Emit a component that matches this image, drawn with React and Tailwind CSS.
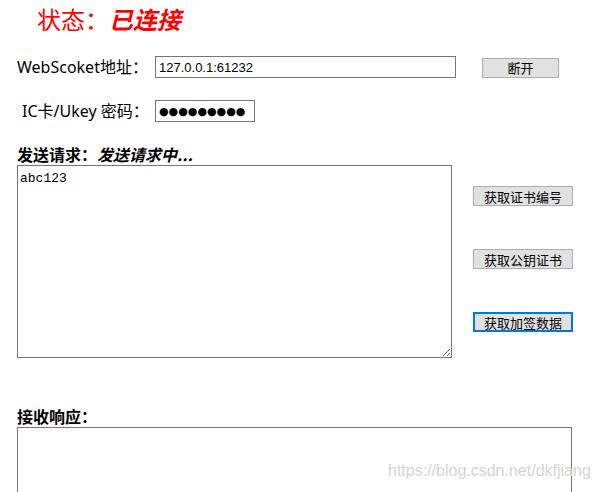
import React from 'react';

const cjk = { fontFamily: '"Noto Sans", "Noto Sans CJK SC", sans-serif' };

const Btn = ({ children, focused }) => (
    <button
        className={
            'h-[20px] w-[100px] bg-[#e1e1e1] text-[13px] leading-none text-black ' +
            (focused ? 'border-2 border-[#0078d7]' : 'border border-[#adadad]')
        }
        style={{ fontFamily: '"Noto Sans CJK SC", sans-serif' }}
    >
        {children}
    </button>
);

const App = () => {
    return (
        <div className="relative w-[597px] h-[492px] overflow-hidden bg-white text-black" style={cjk}>
            <div className="h-[40px] pt-[5px] pl-[37px] text-[24px] leading-[30px] text-[#ff0000]">
                状态：<b className="italic font-bold">已连接</b>
            </div>

            <div className="mt-[16px] flex items-center h-[22px]">
                <label className="ml-[17px] w-[138px] text-[16px] leading-none">WebScoket地址：</label>
                <input
                    readOnly
                    value="127.0.0.1:61232"
                    className="w-[301px] h-[22px] border border-[#767676] px-[3px] text-[13px] outline-none"
                    style={{ fontFamily: '"Liberation Sans", Arial, sans-serif' }}
                />
                <div className="ml-[26px]">
                    <button
                        className="h-[20px] w-[77px] bg-[#e1e1e1] border border-[#adadad] text-[13px] leading-none"
                        style={{ fontFamily: '"Noto Sans CJK SC", sans-serif' }}
                    >
                        断开
                    </button>
                </div>
            </div>

            <div className="mt-[22px] flex items-center h-[22px]">
                <label className="ml-[22px] w-[133px] text-[16px] leading-none">IC卡/Ukey 密码：</label>
                <input
                    readOnly
                    value="●●●●●●●●●"
                    className="w-[100px] h-[22px] border border-[#767676] px-[3px] text-[11px] outline-none"
                    style={{ fontFamily: '"DejaVu Sans", sans-serif' }}
                />
            </div>

            <div
                className="mt-[22px] h-[21px] pl-[17px] text-[16px] leading-[21px] font-bold"
                style={{ fontFamily: '"Noto Sans CJK SC", sans-serif' }}
            >
                发送请求：<i>发送请求中...</i>
            </div>

            <div className="flex">
                <textarea
                    readOnly
                    value="abc123"
                    className="ml-[17px] w-[435px] h-[193px] border border-[#767676] px-[2px] py-[5px] text-[13px] leading-[16px] outline-none"
                    style={{ fontFamily: '"Liberation Mono", "DejaVu Sans Mono", monospace' }}
                />
                <div className="ml-[21px] pt-[21px] flex flex-col gap-[43px]">
                    <Btn>获取证书编号</Btn>
                    <Btn>获取公钥证书</Btn>
                    <Btn focused>获取加签数据</Btn>
                </div>
            </div>

            <div
                className="mt-[48px] h-[21px] pl-[17px] text-[16px] leading-[21px] font-bold"
                style={{ fontFamily: '"Noto Sans CJK SC", sans-serif' }}
            >
                接收响应：
            </div>
            <textarea
                readOnly
                className="block ml-[17px] w-[555px] h-[100px] border border-[#767676] outline-none resize-none"
            />

            <div
                className="absolute left-[388px] top-[460px] text-[16px] leading-[22px] text-[#d4d4d4] whitespace-nowrap"
                style={{ fontFamily: '"Liberation Sans", Arial, sans-serif' }}
            >
                https://blog.csdn.net/dkfjiang
            </div>
        </div>
    );
};

export default App;
